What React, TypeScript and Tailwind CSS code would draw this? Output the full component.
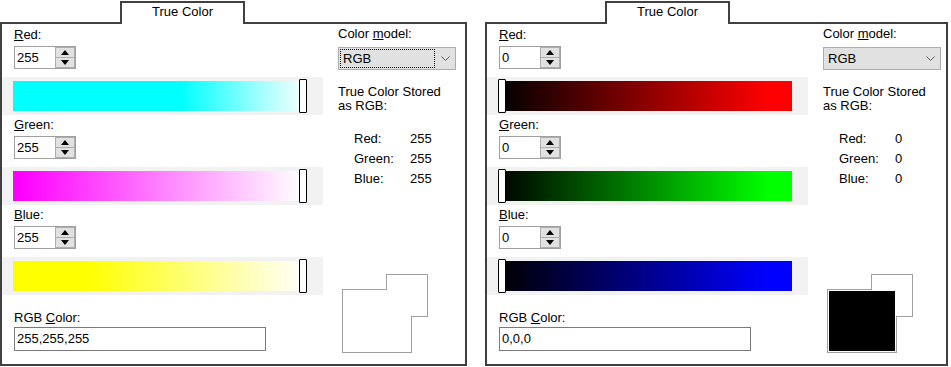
import React from 'react';

interface ChannelRowProps {
  label: string;
  value: number;
  barClass: string;
  first?: boolean;
}

interface ColorPanelProps {
  r: number;
  g: number;
  b: number;
  bars: [string, string, string];
  fill: string;
  focused?: boolean;
  width: string;
}

const SpinBox = ({ value }: { value: number }) => {
  return (
    <div className="flex h-[23px] w-[62px] border border-[#a0a0a0] bg-white">
      <div className="flex flex-1 items-center pl-[2px]">{value}</div>
      <div className="flex w-[20px] flex-col">
        <div className="flex flex-1 items-center justify-center border border-[#adadad] bg-[#e1e1e1]">
          <svg width="8" height="5" viewBox="0 0 8 5">
            <path d="M0 5 L4 0 L8 5 Z" fill="#000" />
          </svg>
        </div>
        <div className="flex flex-1 items-center justify-center border border-t-0 border-[#adadad] bg-[#e1e1e1]">
          <svg width="8" height="5" viewBox="0 0 8 5">
            <path d="M0 0 L8 0 L4 5 Z" fill="#000" />
          </svg>
        </div>
      </div>
    </div>
  );
};

const ChannelRow = ({ label, value, barClass, first }: ChannelRowProps) => {
  // thumb travels over 286px of the 294px bar
  const thumbLeft = 11 + Math.round((value / 255) * 286);
  return (
    <div className={first ? 'mt-[3px]' : 'mt-[2px]'}>
      <div className="pl-[12px] h-4">
        <u>{label[0]}</u>
        {label.slice(1)}
      </div>
      <div className="mt-[3px] pl-[12px]">
        <SpinBox value={value} />
      </div>
      <div className="relative mt-[8px] h-[38px] w-[321px] bg-[#f2f2f2] pt-[4px]">
        <div className={`ml-[11px] h-[30px] w-[294px] ${barClass}`} />
        <div
          className="absolute top-[2px] h-[34px] w-[8px] rounded-[1px] border border-black bg-white"
          style={{ left: thumbLeft }}
        />
      </div>
    </div>
  );
};

const Preview = ({ fill }: { fill: string }) => {
  return (
    <svg width="87" height="80" viewBox="0 0 87 80" className="ml-[4px] mt-[85px]">
      <rect x="44.5" y="0.5" width="41" height="42" fill="#fff" stroke="#a0a0a0" />
      <rect x="0.5" y="15.5" width="69" height="63" fill="#fff" stroke="#a0a0a0" />
      <rect x="45" y="1" width="40" height="41" fill="#fff" />
      <rect x="1" y="16" width="68" height="62" fill="#fff" />
      <rect x="2" y="17" width="66" height="60" fill={fill} />
    </svg>
  );
};

const ColorPanel = ({ r, g, b, bars, fill, focused, width }: ColorPanelProps) => {
  return (
    <div className={`flex flex-col ${width}`}>
      <div className="flex h-[22px] pl-[120px] pt-[1px]">
        <div className="relative z-10 -mb-[2px] flex h-[23px] w-[125px] justify-center border-2 border-b-0 border-[#404040] bg-white pt-[1px]">
          True Color
        </div>
      </div>
      <div className="flex h-[344px] border-2 border-[#404040] bg-white">
        <div className="flex w-[336px] flex-col">
          <ChannelRow label="Red:" value={r} barClass={bars[0]} first />
          <ChannelRow label="Green:" value={g} barClass={bars[1]} />
          <ChannelRow label="Blue:" value={b} barClass={bars[2]} />
          <div className="mt-[15px] pl-[12px] h-4">
            RGB <u>C</u>olor:
          </div>
          <div className="mt-[1px] ml-[12px] flex h-[24px] w-[252px] items-center border border-[#7a7a7a] pl-[2px]">
            {r},{g},{b}
          </div>
        </div>
        <div className="flex flex-col">
          <div className="mt-[2px] h-4">
            Color <u>m</u>odel:
          </div>
          <div className="mt-[5px] flex h-[23px] w-[118px] border border-[#adadad] bg-[#e1e1e1]">
            <div
              className={`my-[1px] ml-[1px] flex w-[95px] items-center pl-[2px] ${
                focused ? 'border border-dotted border-black' : 'border border-transparent'
              }`}
            >
              RGB
            </div>
            <div className="flex flex-1 items-center justify-center">
              <svg width="9" height="6" viewBox="0 0 9 6">
                <polyline points="0.5,0.5 4.5,4.5 8.5,0.5" fill="none" stroke="#606060" strokeWidth="1" />
              </svg>
            </div>
          </div>
          <div className="mt-[15px] leading-[14px]">
            True Color Stored
            <br />
            as RGB:
          </div>
          <div className="mt-[16px] grid grid-cols-[56px_auto] pl-[16px] leading-5">
            <span>Red:</span>
            <span>{r}</span>
            <span>Green:</span>
            <span>{g}</span>
            <span>Blue:</span>
            <span>{b}</span>
          </div>
          <Preview fill={fill} />
        </div>
      </div>
    </div>
  );
};

const App = () => {
  return (
    <div className="flex h-[367px] w-[951px] gap-[18px] bg-white font-['Liberation_Sans',Arial,sans-serif] text-[13px] leading-4 text-black">
      <ColorPanel
        r={255}
        g={255}
        b={255}
        fill="#ffffff"
        focused
        width="w-[467px]"
        bars={[
          'bg-[linear-gradient(to_right,#00ffff_57%,#ffffff)]',
          'bg-[linear-gradient(to_right,#ff00ff_2%,#ffffff_98%)]',
          'bg-[linear-gradient(to_right,#ffff00_25%,#ffffff)]',
        ]}
      />
      <ColorPanel
        r={0}
        g={0}
        b={0}
        fill="#000000"
        width="w-[463px]"
        bars={[
          'bg-[linear-gradient(to_right,#000000,#ff0000_92%)]',
          'bg-[linear-gradient(to_right,#000000,#00ff00_92%)]',
          'bg-[linear-gradient(to_right,#000000,#0000ff_92%)]',
        ]}
      />
    </div>
  );
};

export default App;
